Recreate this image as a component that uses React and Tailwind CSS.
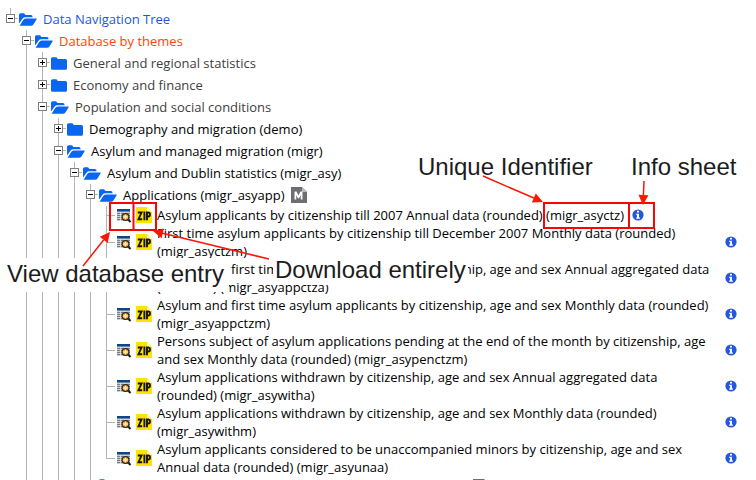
import React from "react";

const FONT = "font-['Open_Sans','Noto_Sans',sans-serif]";

function OpenFolder() {
  return (
    <svg viewBox="0 0 18 13" className="h-[13px] w-[18px] shrink-0" aria-hidden="true">
      <path fill="#0a66f2" d="M0 10.6V1.8Q0 .2 1.5 .2H4.6Q6 .2 6.2 1.9H12Q13.5 1.9 13.5 3.4V4.3H6.2Q4.6 4.3 3.5 5.7Z" />
      <path fill="#0a66f2" d="M.6 12.8 4.2 7Q5 5.4 6.7 5.4H17.2Q18.2 5.4 17.5 6.5L14.6 11.3Q13.6 12.8 12 12.8Z" />
    </svg>
  );
}

function ClosedFolder() {
  return (
    <svg viewBox="0 0 16 13" className="h-[13px] w-4 shrink-0" aria-hidden="true">
      <path fill="#0a66f2" d="M0 1.7Q0 .2 1.5 .2H5Q6.4 .2 6.6 1.9H14.5Q16 1.9 16 3.4V11.3Q16 12.8 14.5 12.8H1.5Q0 12.8 0 11.3Z" />
    </svg>
  );
}

function MetadataIcon() {
  return (
    <svg viewBox="0 0 16 16" className="h-4 w-4" aria-hidden="true">
      <path fill="#6d6d72" d="M0 0H11L16 5V16H0Z" />
      <path fill="#b9b9be" d="M11 0V5H16Z" />
      <path fill="#fff" d="M3.500 12.500V4.500H5.600L7.500 8.600 9.400 4.500H11.500V12.500H9.700V8L8.100 11.300H6.900L5.300 8V12.500Z" />
    </svg>
  );
}

function TableSearchIcon() {
  return (
    <svg viewBox="0 0 16 16" className="h-4 w-4" aria-hidden="true">
      <path fill="#c9cbd0" d="M1 2H14V14H1Z" />
      <path fill="#0d468c" d="M1 2H14V4.500H1Z" />
      <path stroke="#777c85" d="M1 6.5H14M1 8.5H14M1 10.5H14M1 12.5H14" />
      <path stroke="#eceef0" strokeWidth=".7" d="M4.500 5V14M8.500 5V14" />
      <path stroke="#222" strokeWidth="2" d="M12 12.500 14.600 15" />
      <circle cx="9.500" cy="10" r="3.400" fill="#f7a233" stroke="#33261c" strokeWidth="1.200" />
      <path stroke="#fff0b8" strokeWidth="1.300" d="M9.500 7.800V12.200M7.300 10H11.700" />
    </svg>
  );
}

function ZipIcon() {
  return (
    <svg viewBox="0 0 16 16" className="h-4 w-4" aria-hidden="true">
      <path fill="#ffe300" d="M0 0H11L16 5V16H0Z" />
      <path fill="#fff6a8" d="M11 0V5H16Z" />
      <path fill="none" stroke="#151505" strokeWidth="1.900" d="M1.800 5.500H5.600L2.500 12.200H6.200M8.400 4.500V13.200M11 13.200V5.500H12.300Q14 5.500 14 7.500T12.300 9.500H11" />
    </svg>
  );
}

function InfoIcon() {
  return (
    <svg viewBox="0 0 12 12" className="h-3 w-3" aria-hidden="true">
      <circle cx="6" cy="6" r="5.600" fill="#2359d9" />
      <path fill="#fff" d="M5 1.800H7V3.600H5ZM4.200 4.700H7V8.500H7.900V9.700H4.200V8.500H5V5.900H4.200Z" />
    </svg>
  );
}

function Guides({ lines }) {
  return lines.map((on, i) => (
    <span key={i} className="flex w-4 shrink-0 self-stretch pl-2">
      {on ? <span className="w-px bg-[#b4b4b4]" /> : null}
    </span>
  ));
}

function Branch({ guides, open, label, color, below = true, meta }) {
  return (
    <li className="flex h-[22px] items-center">
      <Guides lines={guides} />
      <span className="flex w-4 shrink-0 flex-col self-stretch">
        <span className="ml-2 h-[6px] w-px bg-[#b4b4b4]" />
        <span className="flex items-center pl-1">
          <button
            type="button"
            aria-label={`${open ? "Collapse" : "Expand"} ${label}`}
            className="flex h-[9px] w-[9px] shrink-0 items-center justify-center border border-[#808080] bg-white"
          >
            <svg viewBox="0 0 5 5" className="h-[5px] w-[5px]" shapeRendering="crispEdges" aria-hidden="true">
              <path stroke="#000" d={open ? "M0 2.500H5" : "M0 2.500H5M2.500 0V5"} />
            </svg>
          </button>
          <span className="h-px flex-1 bg-[#b4b4b4]" />
        </span>
        <span className={`ml-2 w-px flex-1 ${below ? "bg-[#b4b4b4]" : ""}`} />
      </span>
      <span className="ml-px flex items-center gap-[6px]">
        {open ? <OpenFolder /> : <ClosedFolder />}
        <a href="#node" className={`whitespace-nowrap ${color}`}>{label}</a>
        {meta && (
          <button type="button" aria-label="Metadata">
            <MetadataIcon />
          </button>
        )}
      </span>
    </li>
  );
}

function Leaf({ lines, last, code }) {
  return (
    <li className="flex items-stretch">
      <Guides lines={[false, true, true, true, true, true]} />
      <span className="flex w-4 shrink-0 flex-col pl-2">
        <span className="w-px flex-1 bg-[#b4b4b4]" />
        <span className="h-px w-[9px] bg-[#b4b4b4]" />
        <span className={`w-px flex-1 ${last ? "" : "bg-[#b4b4b4]"}`} />
      </span>
      <span className="ml-[2px] flex shrink-0 items-center gap-1">
        <button type="button" aria-label="View table"><TableSearchIcon /></button>
        <button type="button" aria-label="Download"><ZipIcon /></button>
      </span>
      <span className={`ml-[5px] ${code ? "" : "flex-1"}`}>
        {lines.map((line) => (
          <span key={line} className="block whitespace-nowrap">{line}</span>
        ))}
      </span>
      <button type="button" aria-label="Information" className={`self-center ${code ? "ml-2" : "mr-[19px]"}`}>
        <InfoIcon />
      </button>
    </li>
  );
}

const BRANCHES = [
  { guides: [], open: true, label: "Data Navigation Tree", color: "text-[#1a56e8]", below: false },
  { guides: [false], open: true, label: "Database by themes", color: "text-[#ff4500]" },
  { guides: [false, true], open: false, label: "General and regional statistics", color: "text-[#404040]" },
  { guides: [false, true], open: false, label: "Economy and finance", color: "text-[#404040]" },
  { guides: [false, true], open: true, label: "Population and social conditions", color: "text-[#404040]" },
  { guides: [false, true, true], open: false, label: "Demography and migration (demo)", color: "text-black" },
  { guides: [false, true, true], open: true, label: "Asylum and managed migration (migr)", color: "text-black" },
  { guides: [false, true, true, true], open: true, label: "Asylum and Dublin statistics (migr_asy)", color: "text-black" },
  { guides: [false, true, true, true, true], open: true, label: "Applications (migr_asyapp)", color: "text-black", meta: true },
];

const LEAVES = [
  ["Asylum applicants by citizenship till 2007 Annual data (rounded) (migr_asyctz)"],
  ["First time asylum applicants by citizenship till December 2007 Monthly data (rounded)", "(migr_asyctzm)"],
  ["Asylum and first time asylum applicants by citizenship, age and sex Annual aggregated data", "(rounded) (migr_asyappctza)"],
  ["Asylum and first time asylum applicants by citizenship, age and sex Monthly data (rounded)", "(migr_asyappctzm)"],
  ["Persons subject of asylum applications pending at the end of the month by citizenship, age", "and sex Monthly data (rounded) (migr_asypenctzm)"],
  ["Asylum applications withdrawn by citizenship, age and sex Annual aggregated data", "(rounded) (migr_asywitha)"],
  ["Asylum applications withdrawn by citizenship, age and sex Monthly data (rounded)", "(migr_asywithm)"],
  ["Asylum applicants considered to be unaccompanied minors by citizenship, age and sex", "Annual data (rounded) (migr_asyunaa)"],
];

const NOTE = "absolute whitespace-nowrap font-['Liberation_Sans',Arial,sans-serif] text-[24px] leading-[30px] text-[#1c1c1c]";

function Arrow({ x1, y1, x2, y2 }) {
  const a = Math.atan2(y2 - y1, x2 - x1);
  const bx = x2 - 10 * Math.cos(a);
  const by = y2 - 10 * Math.sin(a);
  const dx = 5 * Math.sin(a);
  const dy = 5 * Math.cos(a);
  return (
    <>
      <path stroke="#fb1605" strokeWidth="1.500" d={`M${x1} ${y1}L${bx} ${by}`} />
      <path fill="#fb1605" d={`M${x2} ${y2}L${bx + dx} ${by - dy}L${bx - dx} ${by + dy}Z`} />
    </>
  );
}

export default function App() {
  return (
    <main className={`relative h-screen overflow-hidden bg-white pl-[2px] pt-2 text-[13px] leading-[18px] ${FONT}`}>
      <ul>
        {BRANCHES.map((b) => <Branch key={b.label} {...b} />)}
        {LEAVES.map((lines, i) => (
          <Leaf key={lines[0]} lines={lines} code={i === 0} last={i === LEAVES.length - 1} />
        ))}
        <li className="flex h-[22px]">
          <Guides lines={[false, true, true, true, true, true]} />
          <span className="ml-px flex gap-[356px] pt-[3px]">
            <OpenFolder />
            <MetadataIcon />
          </span>
        </li>
      </ul>

      <p className={`${NOTE} left-[5px] top-[258px] h-[34px] w-[224px] bg-white pl-[2px] pt-px`}>View database entry</p>
      <p className={`${NOTE} left-[273px] top-[255px] bg-white pl-[2px] pr-[2px]`}>Download entirely</p>
      <p className={`${NOTE} left-[418px] top-[152px]`}>Unique Identifier</p>
      <p className={`${NOTE} left-[631px] top-[152px]`}>Info sheet</p>

      <svg className="pointer-events-none absolute left-0 top-0 h-[480px] w-[756px]" viewBox="0 0 756 480" fill="none" aria-hidden="true">
        <path stroke="#f90505" strokeWidth="2" d="M110 203H156V230H110ZM133.500 203V230M544 203H654V228H544ZM629 203V228" />
        <Arrow x1={83} y1={266} x2={110} y2={232} />
        <Arrow x1={269} y1={259} x2={153} y2={231} />
        <Arrow x1={483} y1={176} x2={543} y2={202} />
        <Arrow x1={644} y1={181} x2={643} y2={205} />
      </svg>
    </main>
  );
}
